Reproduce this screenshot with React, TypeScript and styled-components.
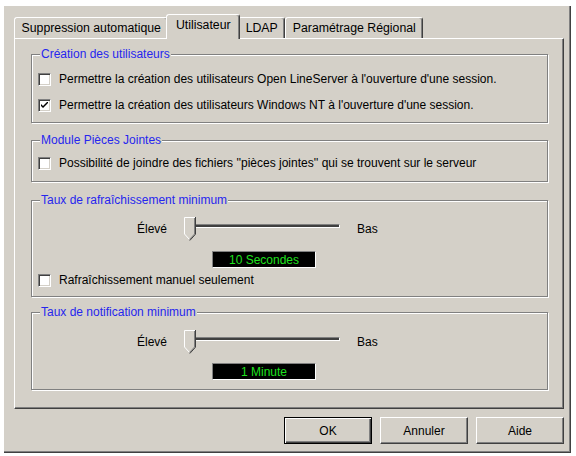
import styled, { createGlobalStyle } from "styled-components";

const GlobalStyle = createGlobalStyle`
  body {
    margin: 0;
    background: #ffffff;
    font-family: "Liberation Sans", Arial, sans-serif;
    font-size: 12px;
    color: #000000;
  }
`;

const Window = styled.div`
  box-sizing: border-box;
  width: 567px;
  height: 447px;
  margin: 6px 0 0 4px;
  padding: 8px 6px 7px 10px;
  display: flex;
  flex-direction: column;
  background: #d4d0c8;
  border-right: 1px solid #404040;
  border-bottom: 1px solid #404040;
  box-shadow: inset -1px -1px #808080;
`;

const TabRow = styled.div`
  display: flex;
  align-items: flex-end;
  height: 24px;
  font-size: 12.3px;
`;

const Tab = styled.div<{ $active?: boolean }>`
  position: relative;
  box-sizing: border-box;
  height: ${(p) => (p.$active ? "25px" : "21px")};
  margin: ${(p) => (p.$active ? "0 -2px -1px -2px" : "0")};
  padding: ${(p) => (p.$active ? "0 8.5px 4px 8.5px" : "0 6.5px 1px 6.5px")};
  z-index: ${(p) => (p.$active ? 1 : 0)};
  display: flex;
  align-items: center;
  background: #d4d0c8;
  border: 1px solid;
  border-bottom: none;
  border-color: #ffffff #404040 transparent #ffffff;
  border-radius: 3px 3px 0 0;
  box-shadow: inset -1px 0 #808080;
  white-space: nowrap;
`;

const Panel = styled.div`
  box-sizing: border-box;
  height: 371px;
  padding: 8px 15px 0 16px;
  display: flex;
  flex-direction: column;
  border: 1px solid;
  border-color: #ffffff #404040 #404040 #ffffff;
  box-shadow: inset -1px -1px #808080;
`;

const Group = styled.fieldset<{ $pt: number; $pb: number; $mt?: number }>`
  margin: ${(p) => p.$mt ?? 0}px 0 0 0;
  padding: ${(p) => p.$pt}px 6px ${(p) => p.$pb}px 6px;
  border: 1px solid #808080;
  box-shadow: inset 1px 1px #ffffff, 1px 1px #ffffff;
  min-width: 0;
`;

const Legend = styled.legend`
  margin-left: 2px;
  padding: 0 1px;
  line-height: 14px;
  color: #2626ee;
  background: #d4d0c8;
`;

const CheckRow = styled.label<{ $mt?: number }>`
  display: flex;
  align-items: center;
  gap: 8px;
  height: 14px;
  margin-top: ${(p) => p.$mt ?? 0}px;
  white-space: nowrap;
`;

const Box = styled.span`
  box-sizing: border-box;
  width: 13px;
  height: 13px;
  flex: none;
  display: flex;
  align-items: center;
  justify-content: center;
  background: #ffffff;
  border: 1px solid;
  border-color: #808080 #ffffff #ffffff #808080;
  box-shadow: inset 1px 1px #404040, inset -1px -1px #d4d0c8;
`;

const SliderRow = styled.div`
  display: flex;
  align-items: center;
  height: 24px;
  padding-left: 99px;
`;

const SideLabel = styled.span<{ $gap: number }>`
  margin-right: ${(p) => p.$gap}px;
`;

const Slider = styled.div`
  position: relative;
  width: 165px;
  height: 24px;
  margin-right: 12px;
`;

const Track = styled.div`
  box-sizing: border-box;
  margin: 7px 5px 0 5px;
  height: 4px;
  background: #404040;
  border: 1px solid;
  border-color: #808080 #ffffff #ffffff #808080;
`;

const Thumb = styled.svg`
  position: absolute;
  left: 4px;
  top: 0;
`;

const Display = styled.div<{ $mt: number }>`
  box-sizing: border-box;
  width: 104px;
  height: 17px;
  margin: ${(p) => p.$mt}px 0 0 174px;
  display: flex;
  align-items: center;
  justify-content: center;
  background: #000000;
  color: #1ee01e;
  border: 1px solid;
  border-color: #808080 #ffffff #ffffff #808080;
`;

const ButtonRow = styled.div`
  display: flex;
  justify-content: flex-end;
  gap: 8px;
  margin-top: 8px;
`;

const Button = styled.button<{ $default?: boolean }>`
  box-sizing: border-box;
  width: 88px;
  height: 27px;
  padding: 0;
  font: inherit;
  color: #000000;
  background: #d4d0c8;
  border: 1px solid;
  border-color: ${(p) => (p.$default ? "#000000" : "#ffffff #404040 #404040 #ffffff")};
  box-shadow: ${(p) =>
    p.$default
      ? "inset 1px 1px #ffffff, inset -1px -1px #404040, inset -2px -2px #808080"
      : "inset -1px -1px #808080"};
`;

const Check = () => (
  <svg width="7" height="7" viewBox="0 0 7 7">
    <path d="M0 2 L0 4 L2 6 L7 1 L7 -1 L2 4 Z" fill="#000" />
  </svg>
);

const CheckBox = ({ checked, label, mt }: { checked?: boolean; label: string; mt?: number }) => (
  <CheckRow $mt={mt}>
    <Box>{checked && <Check />}</Box>
    {label}
  </CheckRow>
);

const TrackBar = () => (
  <SliderRow>
    <SideLabel $gap={13}>Élevé</SideLabel>
    <Slider>
      <Track />
      <Thumb width="12" height="24" viewBox="0 0 12 24">
        <polygon points="0,0 11,0 11,17 5.5,23 0,17" fill="#d4d0c8" />
        <polyline points="0.5,17 0.5,0.5 11,0.5" fill="none" stroke="#fff" />
        <polyline points="0.5,17 5.5,22.5" fill="none" stroke="#fff" />
        <polyline points="10.5,1 10.5,17 5.5,22.5" fill="none" stroke="#808080" />
        <polyline points="11.5,0 11.5,17.2 5.8,23.5" fill="none" stroke="#404040" />
      </Thumb>
    </Slider>
    <SideLabel $gap={0}>Bas</SideLabel>
  </SliderRow>
);

const App = () => {
  return (
    <>
      <GlobalStyle />
      <Window>
        <TabRow>
          <Tab>Suppression automatique</Tab>
          <Tab $active>Utilisateur</Tab>
          <Tab>LDAP</Tab>
          <Tab>Paramétrage Régional</Tab>
        </TabRow>
        <Panel>
          <Group $pt={11} $pb={10}>
            <Legend>Création des utilisateurs</Legend>
            <CheckBox label="Permettre la création des utilisateurs Open LineServer à l'ouverture d'une session." />
            <CheckBox
              checked
              mt={12}
              label="Permettre la création des utilisateurs Windows NT à l'ouverture d'une session."
            />
          </Group>
          <Group $pt={9} $pb={11} $mt={10}>
            <Legend>Module Pièces Jointes</Legend>
            <CheckBox label="Possibilité de joindre des fichiers ''pièces jointes'' qui se trouvent sur le serveur" />
          </Group>
          <Group $pt={10} $pb={9} $mt={11}>
            <Legend>Taux de rafraîchissement minimum</Legend>
            <TrackBar />
            <Display $mt={10}>10 Secondes</Display>
            <CheckBox mt={5} label="Rafraîchissement manuel seulement" />
          </Group>
          <Group $pt={11} $pb={9} $mt={8}>
            <Legend>Taux de notification minimum</Legend>
            <TrackBar />
            <Display $mt={9}>1 Minute</Display>
          </Group>
        </Panel>
        <ButtonRow>
          <Button $default>OK</Button>
          <Button>Annuler</Button>
          <Button>Aide</Button>
        </ButtonRow>
      </Window>
    </>
  );
};

export default App;
